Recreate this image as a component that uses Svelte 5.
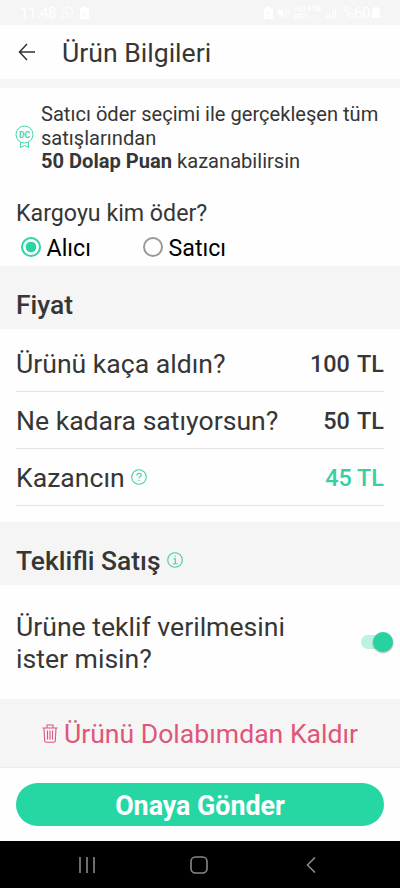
<script lang="ts">
  let payer = $state('alici');
  let offersEnabled = $state(true);

  const payers = [
    { id: 'alici', label: 'Alıcı' },
    { id: 'satici', label: 'Satıcı' }
  ];

  const prices = [
    { label: 'Ürünü kaça aldın?', value: '100 TL' },
    { label: 'Ne kadara satıyorsun?', value: '50 TL' },
    { label: 'Kazancın', value: '45 TL', earning: true }
  ];
</script>

<div class="screen">
  <div class="status">
    <span class="clock">11:48</span>
    <svg width="13" height="13" viewBox="0 0 13 13" fill="none" stroke="currentColor">
      <path d="M1 12l.8-3A5.3 5.3 0 1 1 4 11.200z" />
      <path d="M4.500 4c0 2.500 2 4.500 4.300 4.600" stroke-width="1.500" />
    </svg>
    <svg class="task" width="9" height="12" viewBox="0 0 9 12">
      <path d="M0 1h2.500V0h4v1H9v11H0z" fill="currentColor" />
      <path d="M2 6l2 2 3-4" fill="none" stroke="#f5f5f5" />
    </svg>
    <div class="status-right">
      <svg width="9" height="12" viewBox="0 0 9 12">
        <path d="M2.500 0h4v1.500H9V12H0V1.500h2.500z" fill="currentColor" />
        <path d="M4.500 3.500v4M2.800 6l1.700 2 1.700-2M2.500 10h4" fill="none" stroke="#f5f5f5" stroke-width=".8" />
      </svg>
      <svg width="12" height="12" viewBox="0 0 12 12" fill="currentColor" stroke="currentColor">
        <path d="M1 4h2l3-2.500v9L3 8H1z" stroke="none" />
        <path d="M.5 1l9 10M8.500 3v5M11 1v9" />
      </svg>
      <span class="network"><span>Vo)) 4.5G</span><span>LTE1 ↓↑</span></span>
      <svg width="10" height="11" viewBox="0 0 10 11" stroke="currentColor" stroke-width="1.300">
        <path d="M1 11V8M4 11V6M7 11V3M9.500 11V0" />
      </svg>
      <span class="battery">%60</span>
      <svg width="8" height="11" viewBox="0 0 8 11" fill="currentColor"><path d="M2 0h4v2h2v9H0V2h2z" /></svg>
    </div>
  </div>

  <header>
    <button class="back" aria-label="Geri">
      <svg width="18" height="18" viewBox="0 0 18 18" fill="none" stroke="#333" stroke-width="1.500">
        <path d="M17 9H1.500M9 1L1.500 9 9 17" />
      </svg>
    </button>
    <h1>Ürün Bilgileri</h1>
  </header>

  <section class="shipping">
    <div class="promo">
      <svg width="19" height="24" viewBox="0 0 19 24" fill="none" stroke="#45d3a8">
        <circle cx="9.500" cy="9.500" r="8.500" />
        <path d="M5.500 17.300V22.500l4-2 4 2v-5.200" />
        <text x="9.500" y="12.500" text-anchor="middle">DC</text>
      </svg>
      <p>Satıcı öder seçimi ile gerçekleşen tüm satışlarından<br /><b>50 Dolap Puan</b> kazanabilirsin</p>
    </div>
    <p class="question">Kargoyu kim öder?</p>
    <div class="radios">
      {#each payers as p}
        <label>
          <input type="radio" name="payer" value={p.id} bind:group={payer} />
          <span class="dot"></span>
          {p.label}
        </label>
      {/each}
    </div>
  </section>

  <h2>Fiyat</h2>
  <section class="prices">
    {#each prices as row}
      <div class="row">
        <span class="name">{row.label}</span>
        {#if row.earning}
          <svg class="hint" width="16" height="16" viewBox="0 0 16 16" fill="none" stroke="#3fcfa4" stroke-width="1.100">
            <circle cx="8" cy="8" r="7.300" />
            <path d="M5.900 6.400c0-3 4.300-2.700 4.300-.3 0 1.500-2.100 1.600-2.100 3.200M8.100 10.700v1.300" />
          </svg>
        {/if}
        <span class="value" class:earning={row.earning}>{row.value}</span>
      </div>
    {/each}
  </section>

  <h2 class="offer-title">
    <span>Teklifli Satış</span>
    <svg width="16" height="16" viewBox="0 0 16 16" fill="none" stroke="#3fcfa4" stroke-width="1.100">
      <circle cx="8" cy="8" r="7.300" />
      <path d="M6.300 6.700h2v5M6 11.700h4.400M7.500 4.300h1.300" />
    </svg>
  </h2>
  <section class="offer">
    <p>Ürüne teklif verilmesini ister misin?</p>
    <button
      class="toggle"
      class:on={offersEnabled}
      aria-label="Teklif"
      onclick={() => (offersEnabled = !offersEnabled)}
    ><span></span></button>
  </section>

  <button class="remove">
    <svg width="16" height="19" viewBox="0 0 16 19" fill="none" stroke="currentColor" stroke-width="1.100">
      <path d="M.5 4h15M5 4V1h6v3M2 4l.7 13q.1 1.300 1.300 1.300h8q1.200 0 1.300-1.300L14 4M5.500 6.500v9M8 6.500v9M10.500 6.500v9" />
    </svg>
    <span>Ürünü Dolabımdan Kaldır</span>
  </button>

  <footer>
    <button class="submit"><span>Onaya Gönder</span></button>
  </footer>

  <nav>
    <svg width="16" height="16" viewBox="0 0 16 16"><path d="M1 0v16M8 0v16M15 0v16" /></svg>
    <svg class="home" width="18" height="18" viewBox="0 0 18 18"><rect x="1" y="1" width="16" height="16" rx="4.500" /></svg>
    <svg width="10" height="16" viewBox="0 0 10 16"><path d="M9 .5L1.500 8 9 15.500" /></svg>
  </nav>
</div>

<style>
  .screen {
    display: flex;
    flex-direction: column;
    width: 400px;
    height: 888px;
    overflow: hidden;
    background: #fefefe;
    color: #363636;
    font-family: Roboto, sans-serif;
  }

  h1, h2, p {
    margin: 0;
    font-weight: 400;
  }

  button {
    border: 0;
    padding: 0;
    background: none;
    font-family: inherit;
  }

  svg {
    flex: none;
  }

  .status {
    display: flex;
    align-items: center;
    height: 25px;
    box-sizing: border-box;
    padding: 0 20px 0 20px;
    background: #f5f5f5;
    color: #fff;
    font-size: 15px;
  }

  .clock {
    width: 41px;
    letter-spacing: -0.2px;
  }

  .task {
    margin-left: 6px;
  }

  .status-right {
    display: flex;
    align-items: center;
    gap: 4px;
    margin-left: auto;
  }

  .network {
    display: flex;
    flex-direction: column;
    width: 29px;
    white-space: nowrap;
    font-size: 6.4px;
    line-height: 8px;
    font-weight: 700;
  }

  .battery {
    margin-left: 3px;
    margin-right: -2px;
    letter-spacing: -0.4px;
  }

  header {
    display: flex;
    align-items: center;
    height: 54px;
    padding-left: 18px;
    border-bottom: 9px solid #f5f5f5;
  }

  .back {
    display: flex;
    margin-right: 26px;
  }

  h1 {
    font-size: 26.6px;
  }

  .shipping {
    height: 178px;
    box-sizing: border-box;
    padding: 15px 16px 0 15px;
  }

  .promo {
    display: flex;
    align-items: center;
    gap: 7px;
  }

  .promo svg {
    margin-bottom: 2px;
  }

  .promo text {
    fill: #45d3a8;
    font-size: 8.5px;
    font-weight: 700;
    stroke: none;
  }

  .promo p {
    font-size: 20.1px;
    line-height: 23.5px;
    white-space: nowrap;
    text-wrap: wrap;
  }

  .question {
    margin: 25px 0 0 1px;
    font-size: 23.2px;
    line-height: 28px;
  }

  .radios {
    display: flex;
    margin: 7px 0 0 6px;
    color: #000;
    font-size: 23.2px;
  }

  .radios label {
    display: flex;
    align-items: center;
    width: 122px;
    line-height: 28px;
  }

  .radios input {
    position: absolute;
    opacity: 0;
  }

  .dot {
    width: 20px;
    height: 20px;
    box-sizing: border-box;
    margin: 0 5.5px 2px 0;
    border: 2px solid #999;
    border-radius: 50%;
  }

  input:checked + .dot {
    border-color: #2ed3a2;
    background: radial-gradient(circle, #26d7a4 5px, transparent 5.7px);
  }

  h2 {
    display: flex;
    align-items: center;
    height: 63px;
    padding: 14px 16px 0;
    box-sizing: border-box;
    background: #f5f5f5;
    font-size: 26.4px;
    font-weight: 500;
  }

  .prices {
    height: 193px;
    box-sizing: border-box;
    padding: 6px 16px 0;
  }

  .row {
    display: flex;
    align-items: center;
    height: 57px;
    box-sizing: border-box;
    padding-top: 2px;
    border-bottom: 1px solid #e4e4e4;
  }

  .name {
    padding-bottom: 2px;
    font-size: 26.6px;
  }

  .hint {
    margin: 0 0 2px 6px;
  }

  .value {
    margin-left: auto;
    font-size: 23.4px;
    font-weight: 500;
    word-spacing: 2px;
  }

  .earning {
    color: #37cfa2;
    word-spacing: 0;
  }

  .offer-title svg {
    margin: 0 0 2px 6px;
  }

  .offer {
    display: flex;
    align-items: center;
    justify-content: space-between;
    height: 114px;
    padding: 0 7px 0 16px;
  }

  .offer p {
    width: 290px;
    padding-top: 2px;
    font-size: 26.6px;
    line-height: 32px;
  }

  .toggle {
    display: flex;
    justify-content: flex-start;
    align-items: center;
    width: 32px;
    height: 14px;
    border-radius: 7px;
    background: #ccc;
  }

  .toggle.on {
    justify-content: flex-end;
    background: #bcf2e2;
  }

  .toggle span {
    width: 20px;
    height: 20px;
    border-radius: 50%;
    background: #26d3a0;
    box-shadow: 0 1px 2px rgba(0, 0, 0, 0.35);
  }

  .remove {
    display: flex;
    align-items: center;
    justify-content: center;
    gap: 6px;
    height: 69px;
    box-sizing: border-box;
    background: #f5f5f5;
    border-bottom: 1px solid #ececec;
    color: #e0557a;
    font-size: 26.6px;
  }

  footer {
    height: 73px;
    box-sizing: border-box;
    padding: 15px 16px;
  }

  .submit {
    width: 100%;
    height: 43px;
    padding-top: 2px;
    border-radius: 22px;
    background: #26d7a4;
    color: #fff;
    font-size: 26.8px;
    font-weight: 700;
  }

  nav {
    display: flex;
    align-items: center;
    justify-content: space-between;
    height: 47px;
    box-sizing: border-box;
    padding: 0 84px 0 79px;
    background: #000;
    fill: none;
    stroke: #888;
    stroke-width: 1.6;
  }

  .home {
    margin-right: 4px;
  }
</style>
